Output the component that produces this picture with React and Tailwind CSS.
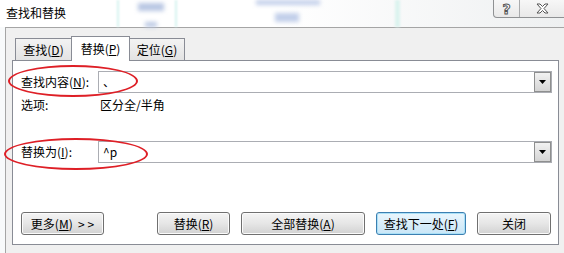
import React from "react";

const font = "font-['Noto_Sans_CJK_SC','Noto_Sans',sans-serif]";

const U = ({ children }) => <span className="underline underline-offset-1">{children}</span>;

const Combo = ({ value }) => (
  <div className="flex-1 h-[22px] border border-[#abadb3] bg-white flex items-center">
    <span className="flex-1 pl-[4px] text-[12px] leading-[20px] text-black">{value}</span>
    <div className="w-[17px] h-[20px] border border-[#8e8f8f] bg-gradient-to-b from-[#f2f2f2] to-[#d4d4d4] flex items-center justify-center">
      <svg width="7" height="4" viewBox="0 0 7 4">
        <polygon points="0,0 7,0 3.5,4" fill="#000" />
      </svg>
    </div>
  </div>
);

const Btn = ({ children, w, primary }) => (
  <button
    className={
      primary
        ? "h-[23px] rounded-[3px] border border-[#3c7fb1] bg-gradient-to-b from-[#eaf6fd] to-[#c9e6f7] text-[12px] text-black shadow-[inset_0_0_0_1px_#a9e0f7] " + w
        : "h-[23px] rounded-[3px] border border-[#707070] bg-gradient-to-b from-[#f4f4f4] via-[#e6e6e6] to-[#d2d2d2] text-[12px] text-black shadow-[inset_0_0_0_1px_#fbfbfb] " + w
    }
  >
    {children}
  </button>
);

export default function App() {
  return (
    <div className={"relative w-[564px] h-[253px] overflow-hidden bg-[#f8fafb] flex flex-col " + font}>
      {/* title bar */}
      <div className="relative h-[27px] shrink-0 bg-gradient-to-r from-white via-white to-[#eef0f1]">
        <div className="absolute left-[117px] top-0 w-[60px] h-[27px] border-x-2 border-[#d6f3f0] blur-[1px]" />
        <div className="absolute left-[138px] top-[3px] w-[26px] h-[8px] bg-[#b9c7e3] blur-[2px]" />
        <div className="absolute left-[145px] top-[22px] w-[12px] h-[5px] bg-[#b9c7e3] blur-[2px]" />
        <div className="absolute left-[256px] top-0 w-[64px] h-[5px] bg-[#c2cfea] blur-[2px]" />
        <div className="absolute left-[275px] top-[13px] w-[24px] h-[9px] bg-[#c2cfea] blur-[2px]" />
        <div className="absolute left-[395px] top-0 w-[5px] h-[27px] bg-[#dcf3ef] blur-[1px]" />
        <span className="absolute left-[6px] top-[5px] text-[12px] leading-[16px] text-black">查找和替换</span>
        <div className="absolute left-[493px] top-0 w-[80px] h-[18px] border border-t-0 border-[#8f9193] rounded-bl-[4px] bg-gradient-to-b from-[#f7f7f7] to-[#e9e9e9] flex">
          <div className="w-[26px] h-full border-r border-[#a9abad] flex items-center justify-center">
            <span className="text-[14px] leading-[14px] font-bold text-white [-webkit-text-stroke:1px_#555] font-['DejaVu_Sans',sans-serif]">?</span>
          </div>
          <div className="w-[45px] h-full flex items-center justify-center">
            <svg width="13" height="11" viewBox="0 0 13 11">
              <polygon
                points="1,1 4,1 6.5,3.5 9,1 12,1 8,5.5 12,10 9,10 6.5,7.5 4,10 1,10 5,5.5"
                fill="#fff"
                stroke="#555"
                strokeWidth="1"
                strokeLinejoin="round"
              />
            </svg>
          </div>
        </div>
      </div>

      {/* client area */}
      <div className="flex-1 flex">
        <div className="w-[5px] shrink-0" />
        <div className="flex-1 border-l border-t border-[#a5a5a5] bg-[#f0f0f0] pt-[8px] pl-[6px] pr-[5px]">
          {/* tabs */}
          <div className="flex items-end pl-[3px] h-[25px] relative z-10">
            <div className="w-[56px] h-[22px] border border-r-0 border-b-0 border-[#898c95] bg-gradient-to-b from-[#f3f3f3] to-[#e3e3e3] text-[12px] leading-[22px] text-center mb-[1px]">
              查找(<U>D</U>)
            </div>
            <div className="w-[59px] h-[25px] border border-b-0 border-[#898c95] bg-white text-[12px] leading-[23px] text-center">
              替换(<U>P</U>)
            </div>
            <div className="w-[55px] h-[22px] border border-l-0 border-b-0 border-[#898c95] bg-gradient-to-b from-[#f3f3f3] to-[#e3e3e3] text-[12px] leading-[22px] text-center mb-[1px]">
              定位(<U>G</U>)
            </div>
          </div>

          {/* panel */}
          <div className="-mt-[1px] h-[185px] border border-[#898c95] bg-white pl-[8px] pr-[6px] flex flex-col text-[12px] text-black">
            <div className="mt-[10px] flex items-center">
              <span className="w-[77px]">查找内容(<U>N</U>):</span>
              <Combo value="、" />
            </div>
            <div className="mt-[4px] flex h-[16px] leading-[16px]">
              <span className="w-[79px]">选项:</span>
              <span>区分全/半角</span>
            </div>
            <div className="mt-[28px] flex items-center">
              <span className="w-[77px]">替换为(<U>I</U>):</span>
              <Combo value="^p" />
            </div>
            <div className="mt-[49px] flex">
              <Btn w="w-[83px]">
                更多(<U>M</U>)&nbsp; &gt; &gt;
              </Btn>
              <div className="w-[53px]" />
              <Btn w="w-[73px]">
                替换(<U>R</U>)
              </Btn>
              <div className="w-[11px]" />
              <Btn w="w-[124px]">
                全部替换(<U>A</U>)
              </Btn>
              <div className="w-[11px]" />
              <Btn w="w-[90px]" primary>
                查找下一处(<U>F</U>)
              </Btn>
              <div className="w-[11px]" />
              <Btn w="w-[74px]">关闭</Btn>
            </div>
          </div>
        </div>
      </div>

      {/* red annotation ellipses */}
      <div className="absolute left-[8px] top-[65px] w-[130px] h-[32px] rounded-[50%] border-2 border-[#de1f26]" />
      <div className="absolute left-[4px] top-[138px] w-[144px] h-[32px] rounded-[50%] border-2 border-[#de1f26]" />
    </div>
  );
}
